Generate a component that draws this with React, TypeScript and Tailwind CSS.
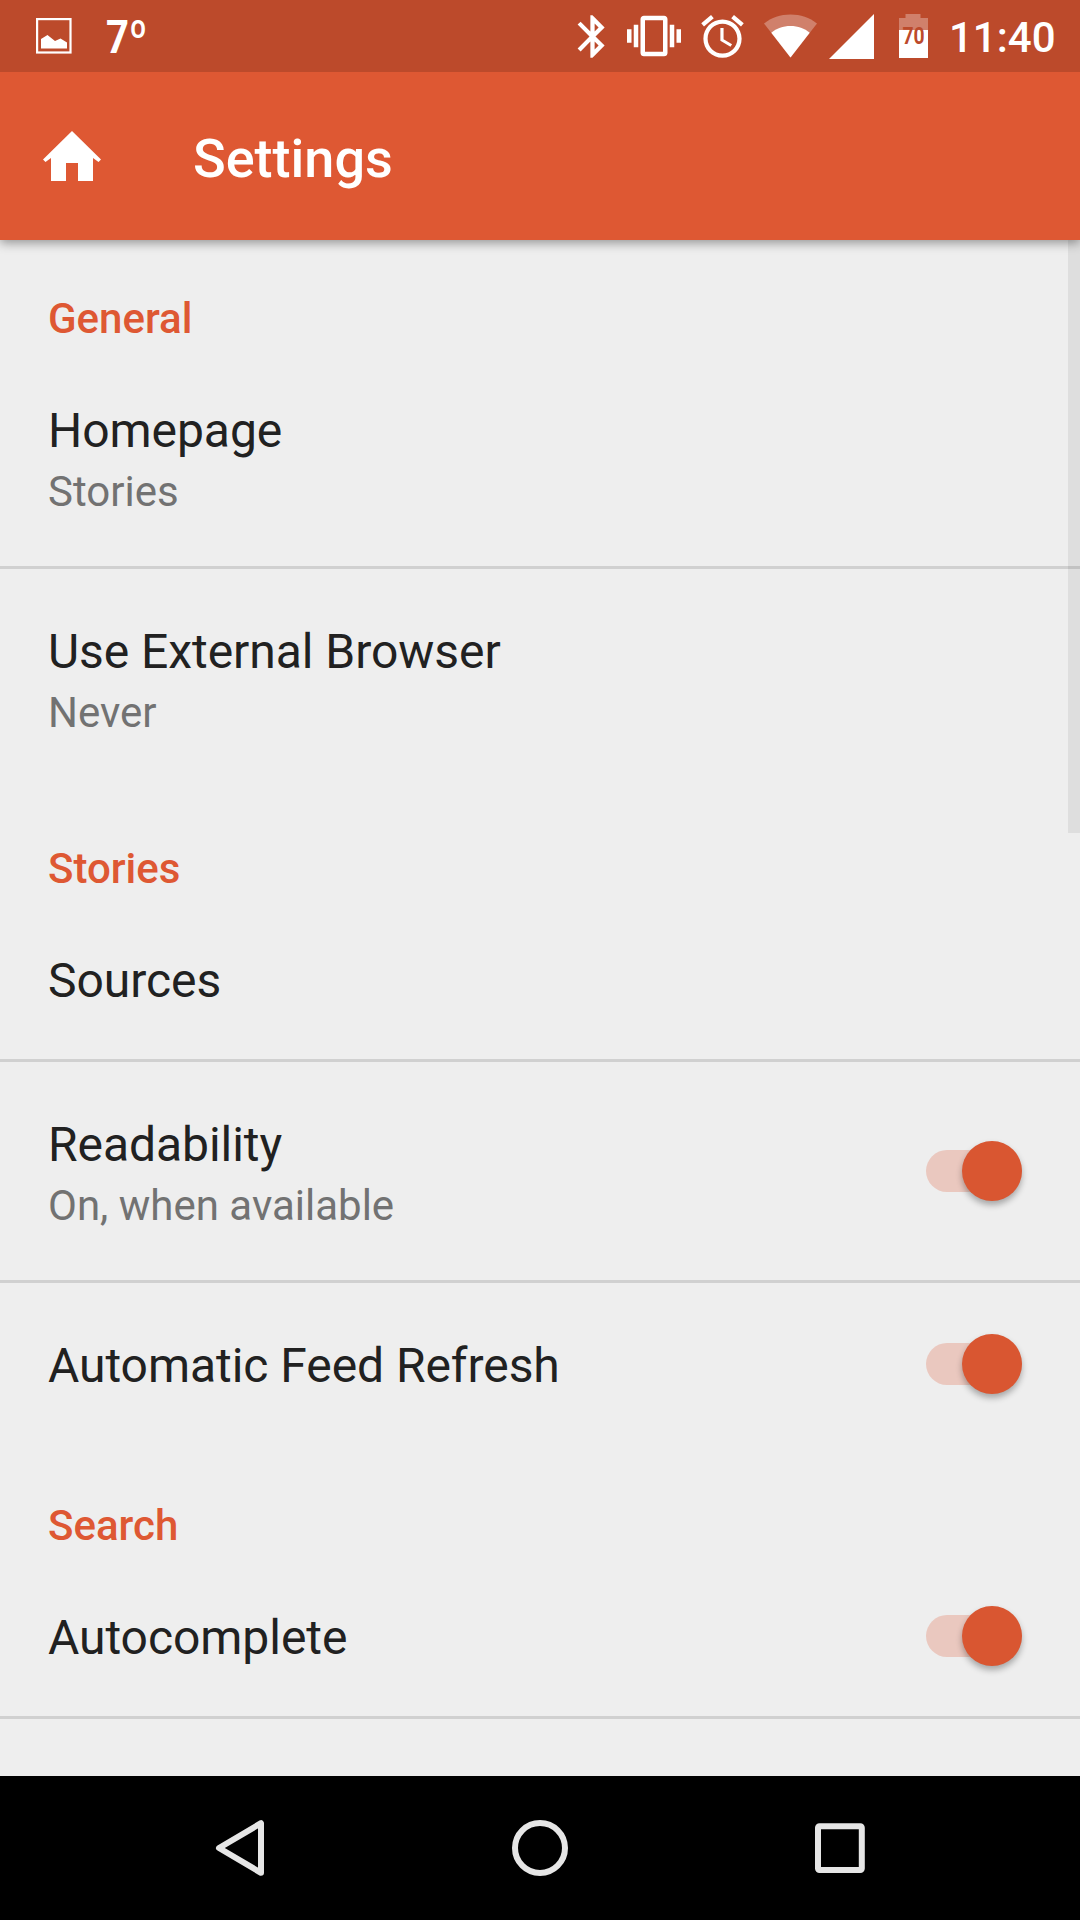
import { useState, type ReactNode } from 'react'

type Item = {
  title: string
  summary?: string
  toggle?: boolean
  divider?: boolean
}

const SECTIONS: { name: string; items: Item[] }[] = [
  {
    name: 'General',
    items: [
      { title: 'Homepage', summary: 'Stories', divider: true },
      { title: 'Use External Browser', summary: 'Never' },
    ],
  },
  {
    name: 'Stories',
    items: [
      { title: 'Sources', divider: true },
      { title: 'Readability', summary: 'On, when available', toggle: true, divider: true },
      { title: 'Automatic Feed Refresh', toggle: true },
    ],
  },
  {
    name: 'Search',
    items: [{ title: 'Autocomplete', toggle: true, divider: true }],
  },
]

function StatusBar() {
  return (
    <div className="z-20 flex h-[72px] shrink-0 items-start bg-[#bc4a2b] text-white">
      <svg className="ml-[36px] mt-[18px] h-[36px] w-[36px]" viewBox="0 0 36 36" fill="none">
        <rect x="1.1" y="1.1" width="33.4" height="33.4" stroke="currentColor" strokeWidth="2.2" />
        <path d="M5 21l6.500-4 7.500 6 5.500-2.500 6.500 4v6H5z" fill="currentColor" />
      </svg>
      <div className="ml-[34px] w-[60px] origin-left scale-x-[0.87] whitespace-nowrap pt-[10px] text-[46px] font-bold leading-[54px]">
        7º
      </div>

      <div className="ml-auto flex items-start">
        <svg className="mt-[11px] h-[51px] w-[51px]" viewBox="0 0 24 24" fill="currentColor">
          <path d="M17.710 7.710L12 2h-1v7.590L6.410 5 5 6.410 10.590 12 5 17.590 6.410 19 11 14.410V22h1l5.710-5.710-4.300-4.290 4.300-4.290zM13 5.830l1.880 1.880L13 9.590V5.830zm1.880 10.460L13 18.170v-3.760l1.880 1.880z" />
        </svg>
        <svg className="ml-[9px] mt-[9px] h-[54px] w-[54px]" viewBox="0 0 24 24" fill="currentColor">
          <path d="M0 15h2V9H0v6zm3 2h2V7H3v10zm19-8v6h2V9h-2zm-3 8h2V7h-2v10zM16.500 3h-9C6.670 3 6 3.670 6 4.500v15c0 .83.67 1.500 1.500 1.500h9c.83 0 1.500-.67 1.500-1.500v-15c0-.83-.67-1.500-1.500-1.500zM16 19H8V5h8v14z" />
        </svg>
        <svg className="ml-[16px] mt-[11px] h-[51px] w-[51px]" viewBox="0 0 24 24" fill="currentColor">
          <path d="M22 5.720l-4.600-3.860-1.290 1.530 4.600 3.860L22 5.720zM7.880 3.390L6.600 1.860 2 5.710l1.290 1.530 4.590-3.850zM12.500 8H11v6l4.750 2.850.75-1.230-4-2.370V8zM12 4c-4.970 0-9 4.030-9 9s4.020 9 9 9c4.970 0 9-4.030 9-9s-4.030-9-9-9zm0 16c-3.870 0-7-3.130-7-7s3.130-7 7-7 7 3.130 7 7-3.130 7-7 7z" />
        </svg>
        <svg className="ml-[16px] mt-[14px] h-[44px] w-[53px]" viewBox="0 0 53 44" fill="currentColor">
          <path d="M26.500 43.500L0 9.500C7.500 3.500 16.500.5 26.500.5S45.500 3.500 53 9.500z" fillOpacity="0.3" />
          <path d="M26.500 43.500L7.300 18.700C12.500 14.300 19 12 26.500 12s14 2.300 19.200 6.700z" />
        </svg>
        <svg className="ml-[12px] mt-[14px] h-[45px] w-[45px]" viewBox="0 0 45 45" fill="currentColor">
          <path d="M45 0v45H0z" />
        </svg>
        <div className="relative ml-[25px] mt-[14px] h-[44px] w-[29px]">
          <svg className="h-[44px] w-[29px]" viewBox="0 0 29 44" fill="currentColor">
            <path d="M0 4h6.500V0h15v4H29v12H0z" fillOpacity="0.3" />
            <path d="M0 16h29v28H0z" />
          </svg>
          <span className="absolute inset-x-0 top-[10px] flex scale-x-[0.84] justify-center text-[23px] font-bold leading-[26px] text-[#bc4a2b]">
            70
          </span>
        </div>
        <div className="ml-[21px] mr-[24px] w-[107px] pt-[13px] text-[42px] font-medium leading-[50px]">
          11:40
        </div>
      </div>
    </div>
  )
}

function AppBar() {
  return (
    <header className="z-10 flex h-[168px] shrink-0 items-center bg-[#de5833] text-white shadow-[0_3px_10px_rgba(0,0,0,0.38)]">
      <svg className="ml-[43px] h-[50px] w-[58px]" viewBox="0 0 58 50" fill="currentColor">
        <path d="M29 0L58 28.500 55.500 31 50 27v23H35V32H23v18H8V27l-5.500 4L0 28.500z" />
      </svg>
      <h1 className="ml-[92px] pt-[5px] text-[54px] font-medium leading-[64px]">Settings</h1>
    </header>
  )
}

function Switch() {
  const [on, setOn] = useState(true)

  return (
    <button
      type="button"
      role="switch"
      aria-checked={on}
      onClick={() => setOn(!on)}
      className={`mr-[58px] flex h-[42px] w-[96px] items-center rounded-full ${
        on ? 'justify-end bg-[#eac8bf]' : 'justify-start bg-[#b9b9b9]'
      }`}
    >
      <span
        className={`size-[60px] shrink-0 rounded-full shadow-[0_4px_6px_rgba(0,0,0,0.3)] ${
          on ? 'bg-[#d95631]' : 'bg-[#f1f1f1]'
        }`}
      />
    </button>
  )
}

function Row({ item }: { item: Item }) {
  return (
    <div
      className={`flex shrink-0 items-center justify-between border-b-[3px] pl-[48px] ${
        item.summary ? 'h-[221px]' : 'h-[164px]'
      } ${item.divider ? 'border-[#d0d0d0]' : 'border-transparent'}`}
    >
      <div className="pt-[4px]">
        <p className="text-[48px] leading-[56px] tracking-[-0.05px] text-[#212121]">{item.title}</p>
        {item.summary && (
          <p className="pt-[8px] text-[42px] leading-[49px] text-[#727272]">{item.summary}</p>
        )}
      </div>
      {item.toggle && <Switch />}
    </div>
  )
}

function NavButton({ children }: { children: ReactNode }) {
  return (
    <svg
      className="size-[60px]"
      viewBox="0 0 60 60"
      fill="none"
      stroke="#e6e6e6"
      strokeWidth="6"
      strokeLinejoin="round"
    >
      {children}
    </svg>
  )
}

export default function App() {
  return (
    <div className="relative flex h-[1920px] w-[1080px] flex-col overflow-hidden bg-[#eeeeee] font-[Roboto,sans-serif]">
      <StatusBar />
      <AppBar />

      <main className="relative flex min-h-0 flex-1 flex-col overflow-hidden">
        {SECTIONS.map((section) => (
          <section key={section.name} className="shrink-0">
            <h2 className="h-[108px] pl-[48px] pt-[54px] text-[42px] font-medium leading-[49px] text-[#de5833]">
              {section.name}
            </h2>
            {section.items.map((item) => (
              <Row key={item.title} item={item} />
            ))}
          </section>
        ))}
        {/* scroll thumb */}
        <div className="absolute right-0 top-0 h-[593px] w-[12px] bg-black/[0.065]" />
      </main>

      <nav className="flex h-[144px] shrink-0 items-center justify-center gap-[240px] bg-black">
        <NavButton>
          <path d="M51 5.200v49.600L9 30z" />
        </NavButton>
        <NavButton>
          <circle cx="30" cy="30" r="25" />
        </NavButton>
        <NavButton>
          <rect x="8" y="8.300" width="43.800" height="43.800" rx="1.5" />
        </NavButton>
      </nav>
    </div>
  )
}
